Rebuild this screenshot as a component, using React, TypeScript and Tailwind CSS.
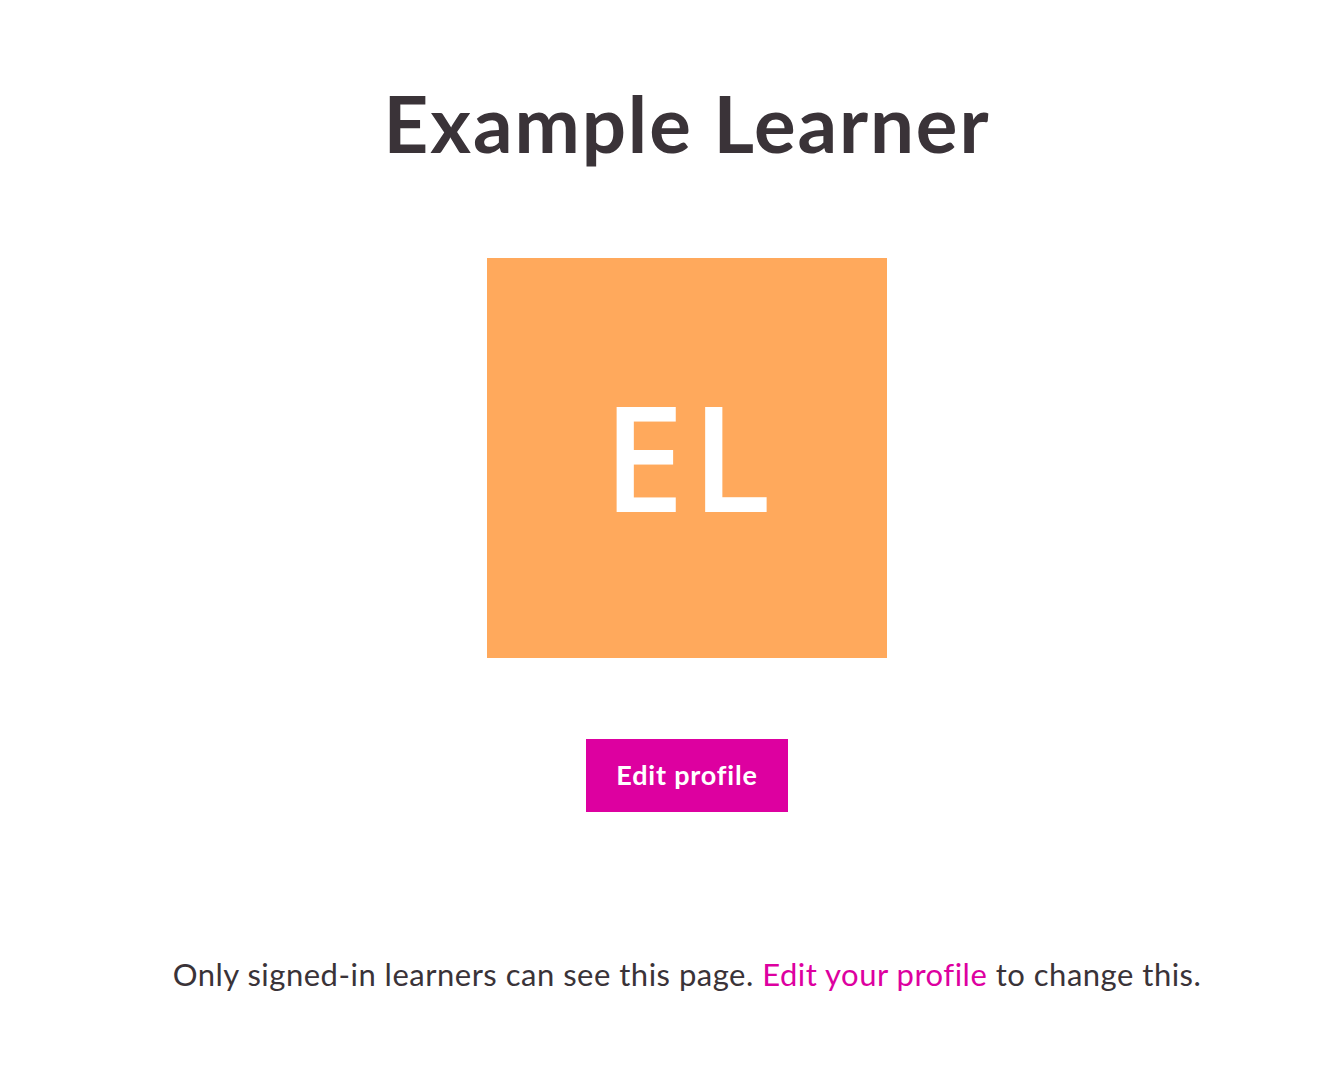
export default function App() {
  return (
    <div className="w-[1332px] h-[1074px] bg-white flex flex-col items-center pl-[42px]" style={{ fontFamily: "Lato, 'Noto Sans', sans-serif" }}>
      <h1 className="mt-[73px] text-[78px] leading-[100px] font-bold text-[#3a3338] tracking-[1.9px]">Example Learner</h1>
      <div className="mt-[85px] w-[400px] h-[400px] bg-[#ffa95c] flex items-center justify-center">
        <span className="text-[146px] font-semibold text-white tracking-[7px] leading-none pl-[7px] -mt-[4px]" style={{ fontFamily: "'Open Sans', sans-serif" }}>EL</span>
      </div>
      <button className="mt-[81px] w-[202px] h-[73px] bg-[#dd00a0] text-white text-[27px] font-bold tracking-[0.8px]">Edit profile</button>
      <p className="mt-[139px] text-[31px] text-[#3a3338] tracking-[0.5px]">
        Only signed-in learners can see this page. <a className="text-[#dd00a0]">Edit your profile</a> to change this.
      </p>
    </div>
  );
}
